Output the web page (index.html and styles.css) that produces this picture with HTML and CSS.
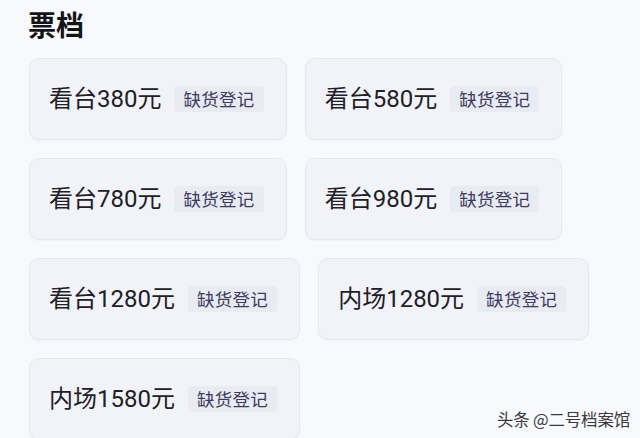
FILE: index.html
```html
<!DOCTYPE html>
<html>
  <head>
    <meta name="viewport" content="width=device-width, initial-scale=1" />
    <link rel="stylesheet" href="styles.css">
  </head>
  <body>
    <!-- Ticket tiers -->
    <div class="section">
      <h2 class="title">票档</h2>
      <div class="tiers">
        <div class="tier">
          <span class="price">看台380元</span>
          <span class="tag">缺货登记</span>
        </div>
        <div class="tier">
          <span class="price">看台580元</span>
          <span class="tag">缺货登记</span>
        </div>
        <div class="tier">
          <span class="price">看台780元</span>
          <span class="tag">缺货登记</span>
        </div>
        <div class="tier">
          <span class="price">看台980元</span>
          <span class="tag">缺货登记</span>
        </div>
        <div class="tier">
          <span class="price">看台1280元</span>
          <span class="tag">缺货登记</span>
        </div>
        <div class="tier">
          <span class="price">内场1280元</span>
          <span class="tag">缺货登记</span>
        </div>
        <div class="tier">
          <span class="price">内场1580元</span>
          <span class="tag">缺货登记</span>
        </div>
      </div>
    </div>

    <!-- Watermark -->
    <div class="watermark">头条 @二号档案馆</div>
  </body>
</html>
```

FILE: styles.css
```css
body {
  font-family: "Noto Sans CJK SC", "Noto Sans", sans-serif;
  margin: 0;
  background-color: #f8f9fc;
  color: #1e1e24;
  height: 438px;
  overflow: hidden;
  position: relative;
}

.section {
  padding: 6px 28px 0 29px;
}

.title {
  margin: 0 0 15px -1px;
  font-size: 28px;
  line-height: 37px;
  font-weight: 700;
  color: #141418;
}

.tiers {
  display: flex;
  flex-wrap: wrap;
  gap: 18px;
}

.tier {
  display: flex;
  align-items: center;
  box-sizing: border-box;
  height: 82px;
  padding: 0 22px 0 19px;
  background-color: #f2f3f8;
  border: 1px solid #e6e8ef;
  border-radius: 10px;
  box-shadow: 0 1px 2px rgba(30, 40, 80, 0.04);
}

.price {
  font-family: Roboto, "Noto Sans CJK SC", sans-serif;
  font-size: 24px;
  line-height: 30px;
  color: #202026;
}

.tag {
  margin-left: 13px;
  height: 26px;
  line-height: 26px;
  padding: 0 9px;
  font-size: 17.5px;
  letter-spacing: 0.3px;
  color: #3e3a5e;
  background-color: #e9ebf2;
  border-radius: 4px;
}

.watermark {
  position: absolute;
  right: 10px;
  bottom: 7px;
  font-size: 16.5px;
  color: #3a3a3a;
  letter-spacing: -0.2px;
}
```
